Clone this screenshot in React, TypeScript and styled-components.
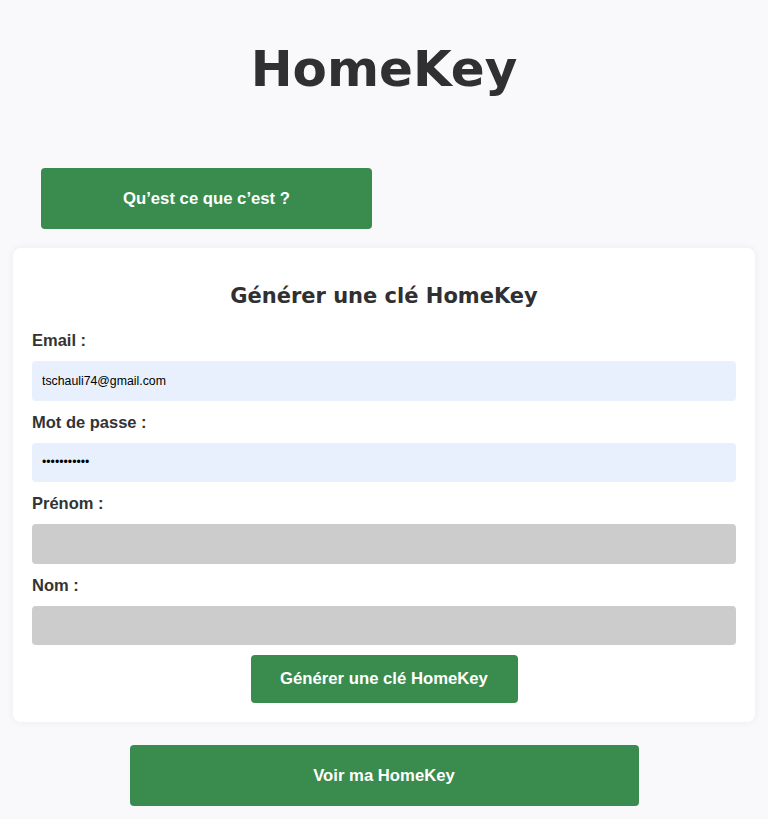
import React from "react";
import styled, { createGlobalStyle } from "styled-components";

const GlobalStyle = createGlobalStyle`
  html, body {
    margin: 0;
    padding: 0;
    background: #f9f8fb;
  }
  body {
    font-family: "Liberation Sans", Arial, sans-serif;
    color: #333;
  }
  * { box-sizing: border-box; }
`;

const Page = styled.div`
  display: flex;
  flex-direction: column;
  padding: 0 13px 13px;
`;

const Title = styled.h1`
  margin: 0;
  padding-top: 40px;
  height: 168px;
  text-align: center;
  font-family: "DejaVu Sans", "Open Sans", sans-serif;
  font-weight: 700;
  font-size: 50px;
  line-height: 58px;
  color: #302f31;
`;

const TopRow = styled.div`
  display: flex;
  padding-left: 28px;
  margin-bottom: 19px;
`;

const GreenButton = styled.button<{ $w: number; $h: number }>`
  width: ${(p) => p.$w}px;
  height: ${(p) => p.$h}px;
  border: none;
  border-radius: 4px;
  background: #3a8b4e;
  color: #fff;
  font-family: "Liberation Sans", Arial, sans-serif;
  font-weight: 700;
  font-size: 16.7px;
  cursor: pointer;
  padding: 0;
`;

const Card = styled.form`
  background: #fff;
  border-radius: 8px;
  box-shadow: 0 0 8px rgba(0, 0, 0, 0.06);
  padding: 20px 19px 19px;
  display: flex;
  flex-direction: column;
`;

const CardTitle = styled.h2`
  margin: 15px 0 10px;
  text-align: center;
  font-family: "DejaVu Sans", "Open Sans", sans-serif;
  font-weight: 700;
  font-size: 21px;
  line-height: 26px;
  color: #302f31;
`;

const Label = styled.label`
  display: block;
  margin: 12px 0;
  font-size: 16.5px;
  line-height: 18px;
  font-weight: 700;
  color: #333;
`;

const Input = styled.input<{ $filled?: boolean }>`
  display: block;
  width: 100%;
  height: 39.5px;
  border: none;
  border-radius: 4px;
  padding: 0 10px;
  background: ${(p) => (p.$filled ? "#e8f0fe" : "#cccccc")};
  font-family: "Liberation Sans", Arial, sans-serif;
  font-size: 12.3px;
  color: #000;
  outline: none;
`;

const Center = styled.div`
  display: flex;
  justify-content: center;
  margin-top: 10px;
`;

const BottomRow = styled.div`
  display: flex;
  justify-content: center;
  margin-top: 23px;
`;

export default function App() {
  return (
    <>
      <GlobalStyle />
      <Page>
        <Title>HomeKey</Title>
        <TopRow>
          <GreenButton type="button" $w={331} $h={61}>
            Qu’est ce que c’est ?
          </GreenButton>
        </TopRow>
        <Card onSubmit={(e) => e.preventDefault()}>
          <CardTitle>Générer une clé HomeKey</CardTitle>
          <Label htmlFor="email">Email :</Label>
          <Input id="email" type="email" $filled defaultValue="tschauli74@gmail.com" readOnly />
          <Label htmlFor="pwd">Mot de passe :</Label>
          <Input id="pwd" type="password" $filled defaultValue="abcdefghijk" readOnly />
          <Label htmlFor="prenom">Prénom :</Label>
          <Input id="prenom" type="text" />
          <Label htmlFor="nom">Nom :</Label>
          <Input id="nom" type="text" />
          <Center>
            <GreenButton type="submit" $w={267} $h={48}>
              Générer une clé HomeKey
            </GreenButton>
          </Center>
        </Card>
        <BottomRow>
          <GreenButton type="button" $w={509} $h={61}>
            Voir ma HomeKey
          </GreenButton>
        </BottomRow>
      </Page>
    </>
  );
}
